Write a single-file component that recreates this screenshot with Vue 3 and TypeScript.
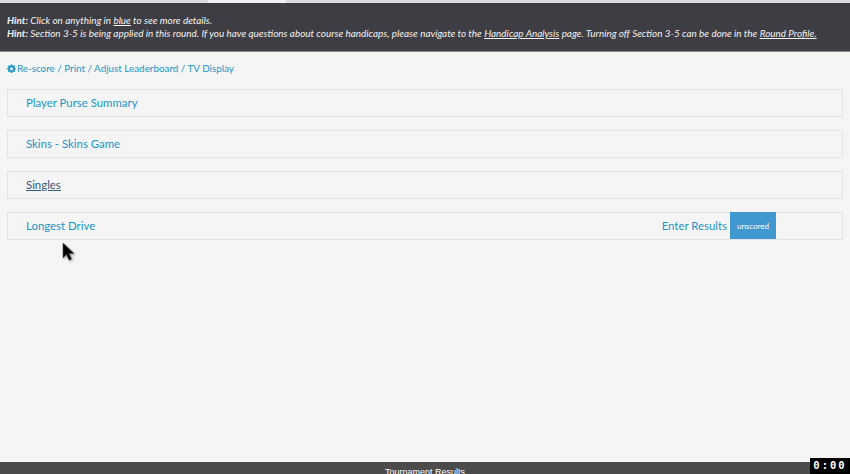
<script setup lang="ts">
const rows = [
  { label: 'Player Purse Summary', cls: '' },
  { label: 'Skins - Skins Game', cls: '' },
  { label: 'Singles', cls: 'dark' },
];
</script>

<template>
  <div class="page">
    <div class="strip"><span class="tab"></span></div>
    <div class="hint">
      <p><b>Hint:</b> Click on anything in <u>blue</u> to see more details.</p>
      <p><b>Hint:</b> Section 3-5 is being applied in this round. If you have questions about course handicaps, please navigate to the <u>Handicap Analysis</u> page. Turning off Section 3-5 can be done in the <u>Round Profile.</u></p>
    </div>
    <main class="content">
      <div class="tools">
        <svg class="gear" viewBox="0 0 24 24" width="9" height="9"><path fill="#1b96c8" fill-rule="evenodd" d="M10 1h4l.6 3.100 1.900.8L19.100 3 22 5.900l-1.900 2.600.8 1.900L24 11v3l-3.100.6-.8 1.900 1.900 2.600L19.100 22l-2.600-1.900-1.900.8L14 24h-4l-.6-3.100-1.900-.8L4.900 22 2 19.100l1.900-2.600-.8-1.900L0 14v-3l3.100-.6.8-1.900L2 5.900 4.900 3l2.600 1.900 1.900-.8zM12 8.500a4 4 0 1 0 0 8 4 4 0 0 0 0-8z"/></svg>
        <span>Re-score / Print / Adjust Leaderboard / TV Display</span>
      </div>
      <section v-for="r in rows" :key="r.label" class="row">
        <span class="title" :class="r.cls">{{ r.label }}</span>
      </section>
      <section class="row">
        <span class="title">Longest Drive</span>
        <div class="actions">
          <span class="enter">Enter Results</span>
          <span class="badge">unscored</span>
        </div>
      </section>
    </main>
    <footer class="foot">Tournament Results</footer>
    <svg class="cursor" width="14" height="20" viewBox="0 0 14 20"><path d="M1 1v15l3.500-3.400 2.500 5.600 2.600-1.100-2.500-5.500h5z" fill="#000" stroke="#555" stroke-width=".6"/></svg>
    <div class="timer">0:00</div>
  </div>
</template>

<style>
html, body { margin: 0; background: #f5f5f5; }
</style>

<style scoped>
.page {
  position: relative;
  width: 850px;
  height: 474px;
  overflow: hidden;
  display: flex;
  flex-direction: column;
  background: #f5f5f5;
  font-family: Lato, "Open Sans", sans-serif;
}
.strip { height: 3px; background: #dcdcdc; flex: none; position: relative; }
.tab { position: absolute; left: 208px; width: 78px; top: 0; height: 3px; background: #f0f0f0; }
.hint {
  flex: none;
  height: 49px;
  box-sizing: border-box;
  padding: 10px 7px 0;
  background: #3e3d43;
  border-top: 1px solid #3e3d43;
  border-bottom: 1px solid #8b8b8b;
  color: #f2f2f2;
  font-size: 9.910px;
  line-height: 13px;
  font-style: italic;
}
.hint p { margin: 0; white-space: nowrap; }
.content { flex: 1; padding: 9px 7px 0; }
.tools {
  display: flex;
  align-items: center;
  gap: 1px;
  height: 14px;
  margin-bottom: 14px;
  color: #1b96c8;
  font-size: 9.850px;
}
.row {
  box-sizing: border-box;
  height: 28px;
  margin-bottom: 13px;
  padding-left: 18px;
  display: flex;
  align-items: center;
  justify-content: space-between;
  border: 1px solid #e3e3e3;
  color: #1b96c8;
  font-size: 11.400px;
}
.title { margin-bottom: 2px; }
.title.dark { color: #34587a; text-decoration: underline; }
.actions { display: flex; align-items: stretch; align-self: stretch; margin: -1px 66px 0 0; }
.enter { align-self: center; margin: 0 3px 1px 0; }
.badge {
  width: 46px;
  display: flex;
  align-items: center;
  justify-content: center;
  background: #4197cf;
  color: #fff;
  font-size: 8px;
}
.foot {
  flex: none;
  height: 12px;
  background: #4b4b4b;
  color: #fff;
  font-family: "Liberation Sans", sans-serif;
  font-size: 9px;
  line-height: 20px;
  text-align: center;
  overflow: hidden;
}
.cursor { position: absolute; left: 62px; top: 242px; filter: drop-shadow(1px 1px 1px rgba(0,0,0,.35)); }
.timer {
  position: absolute;
  right: 0;
  bottom: 0;
  width: 40px;
  height: 16px;
  background: #000;
  color: #fff;
  font-family: "DejaVu Sans Mono", monospace;
  font-size: 10.500px;
  font-weight: 700;
  line-height: 15px;
  text-align: center;
  letter-spacing: 2px;
}
</style>
